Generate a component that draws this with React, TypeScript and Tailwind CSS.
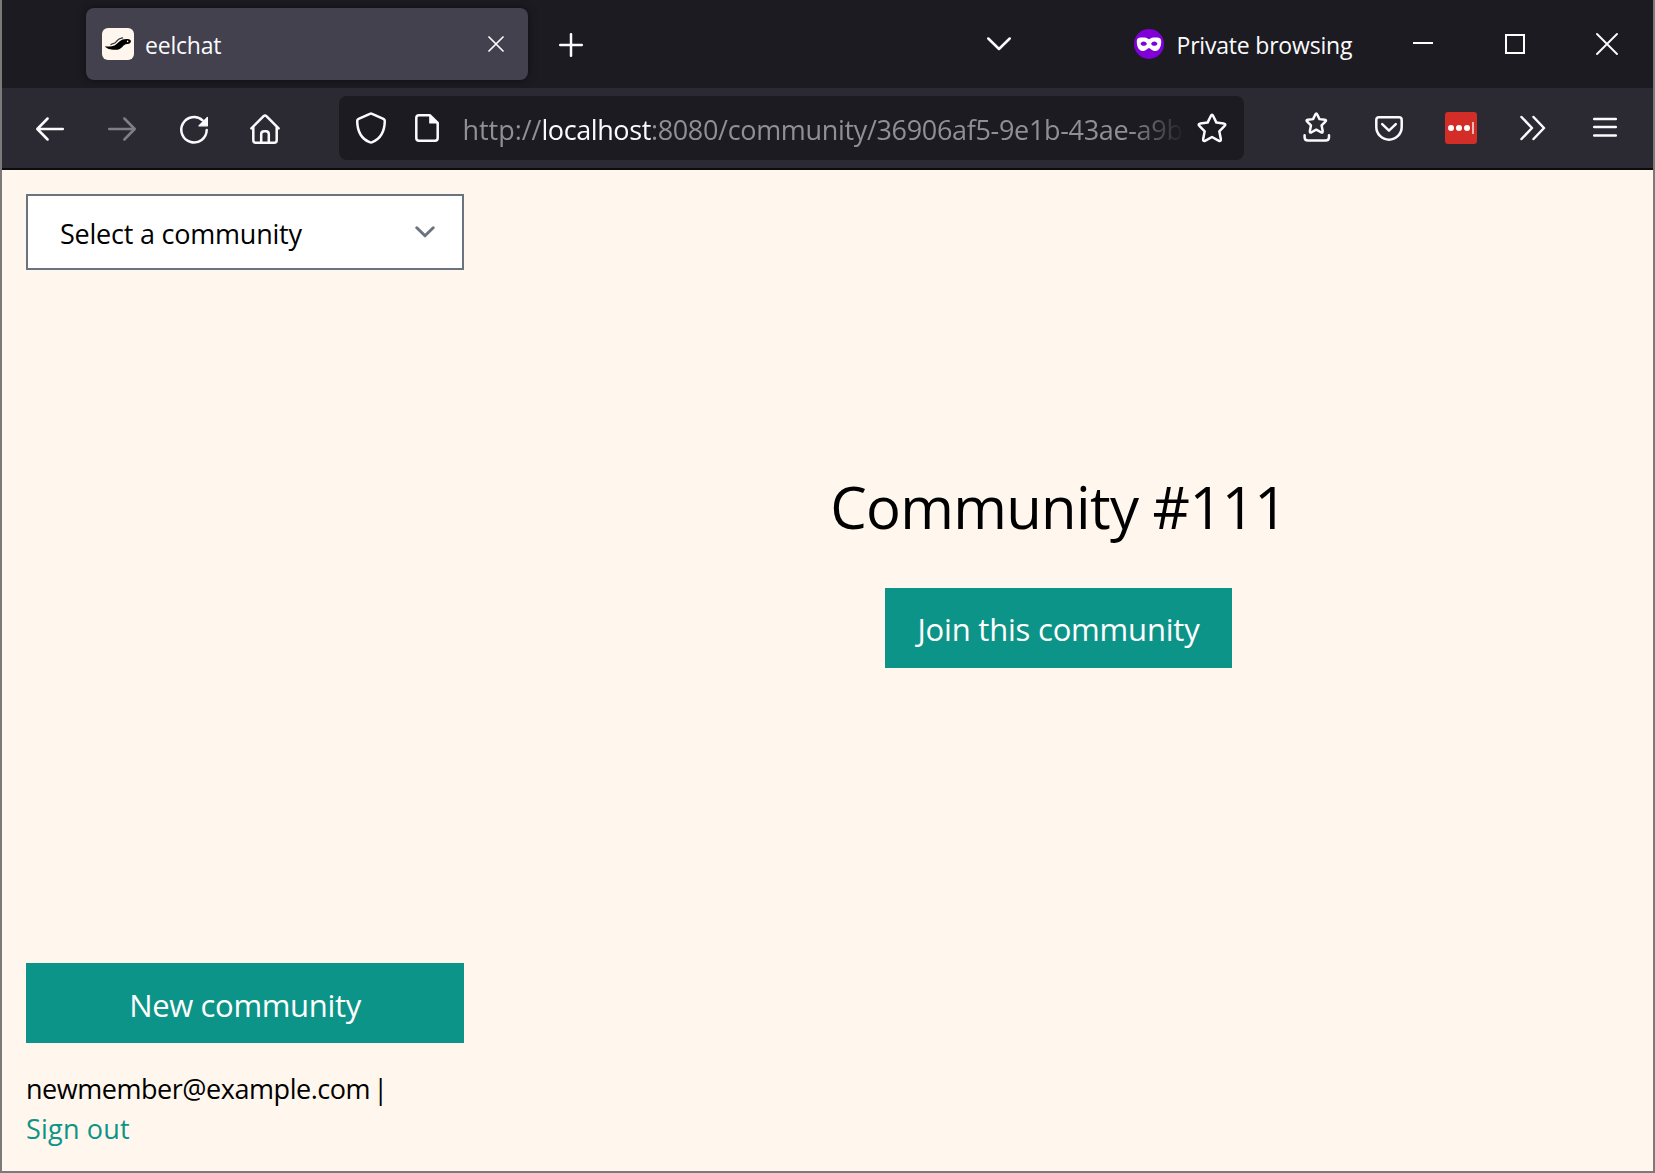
import type { ReactNode } from "react";

function Icon({ children, className = "" }: { children: ReactNode; className?: string }) {
  return (
    <svg
      viewBox="0 0 32 32"
      fill="none"
      stroke="#fbfbfe"
      strokeWidth="2.5"
      strokeLinecap="round"
      strokeLinejoin="round"
      className={`size-8 shrink-0 ${className}`}
    >
      {children}
    </svg>
  );
}

const STAR =
  "M14.7 4.2Q16 1.5 17.3 4.2L20.4 10.6L27.6 11.4Q30.6 11.9 28.4 14.1L23.3 19.3L24.8 26.8Q25.2 29.9 22.5 28.6L16 25L9.5 28.6Q6.8 29.9 7.2 26.8L8.7 19.3L3.6 14.1Q1.4 11.9 4.4 11.4L11.6 10.6Z";

function EelLogo() {
  return (
    <svg viewBox="0 0 32 32" className="size-8 shrink-0 rounded-md bg-[#fff7ed]">
      <path
        d="M3 18.2C6 18.6 9.5 18.7 12.5 17.6C15.5 16.2 17.5 12.6 20.5 11.6C23 10.9 27.5 10.8 28.8 12.4C29.5 14 28 15.8 25.5 16.1C22.5 16.4 21.8 17.2 20.3 19C18.2 21.2 15.5 22 12.5 21.8C8.5 21.5 4.5 20.8 3 18.2Z"
        fill="#000"
      />
      <path
        d="M9 16.6C10.4 15.4 11.6 16 13.2 14.8C15 13.2 15.8 10.9 18.6 10.3L20.6 9.8"
        fill="none"
        stroke="#333"
        strokeWidth="1.3"
        strokeLinecap="round"
      />
      <circle cx="25.6" cy="13.4" r="0.8" fill="#fff7ed" />
    </svg>
  );
}

function MaskBadge() {
  return (
    <svg viewBox="0 0 30 30" className="size-[30px] shrink-0">
      <circle cx="15" cy="15" r="15" fill="#8000d7" />
      <path
        fillRule="evenodd"
        fill="#fff"
        d="M15 10.3C13 8.9 11.4 8.5 9 8.5C5.4 8.5 2.8 8.6 2.8 12.6C2.8 18 4.8 22 8.8 22C12 22 13 19.2 15 19.2C17 19.2 18 22 21.2 22C25.2 22 27.2 18 27.2 12.6C27.2 8.6 24.6 8.5 21 8.5C18.6 8.5 17 8.9 15 10.3ZM6.4 14.9C7.8 11.6 11.6 11.6 13 14.9C11.2 17.4 8.2 17.4 6.4 14.9ZM17 14.9C18.4 11.6 22.2 11.6 23.6 14.9C21.8 17.4 18.8 17.4 17 14.9Z"
      />
    </svg>
  );
}

function TabBar() {
  return (
    <div className="flex h-[88px] items-center bg-[#1c1b22] pr-[35px] pl-[84px] text-[23px] text-[#fbfbfe]">
      <div className="flex h-[72px] w-[442px] items-center rounded-lg bg-[#42414d] pr-6 pl-4 shadow-[0_0_8px_rgba(0,0,0,0.5)]">
        <EelLogo />
        <span className="ml-[11px] pt-0.5 tracking-[-0.2px]">eelchat</span>
        <svg viewBox="0 0 16 16" className="ml-auto size-4" stroke="#fbfbfe" strokeWidth="1.7" strokeLinecap="round">
          <path d="M1 1L15 15M15 1L1 15" />
        </svg>
      </div>
      <svg viewBox="0 0 24 24" className="mt-0.5 ml-[31px] size-6" stroke="#fbfbfe" strokeWidth="2.5" strokeLinecap="round">
        <path d="M12 1.2V22.8M1.2 12H22.8" />
      </svg>
      <svg viewBox="0 0 24 14" className="ml-auto h-3.5 w-6" fill="none" stroke="#fbfbfe" strokeWidth="2.5" strokeLinecap="round" strokeLinejoin="round">
        <path d="M1.3 1.5L12 12L22.7 1.5" />
      </svg>
      <div className="ml-[123px] flex w-[279px] items-center">
        <MaskBadge />
        <span className="ml-[12.5px] pt-0.5 tracking-[-0.2px] whitespace-nowrap">Private browsing</span>
      </div>
      <div className="h-0.5 w-5 -translate-y-px bg-white" />
      <div className="ml-[72px] size-5 border-2 border-white" />
      <svg viewBox="0 0 22 22" className="ml-[71px] size-[22px]" stroke="#fbfbfe" strokeWidth="1.9" strokeLinecap="round">
        <path d="M1 1L21 21M21 1L1 21" />
      </svg>
    </div>
  );
}

function AddressBar() {
  return (
    <div className="ml-[58px] flex h-16 w-[905px] items-center rounded-lg bg-[#1c1b22] px-4">
      <Icon>
        <path d="M14.9 1.8Q16 1.2 17.1 1.8L28.4 6.9Q29.8 7.6 29.8 9.1C29.6 19 26 26.6 17.4 30.2Q16 30.9 14.6 30.2C6 26.6 2.4 19 2.2 9.1Q2.2 7.6 3.6 6.9Z" />
      </Icon>
      <Icon className="ml-6">
        <path d="M8 3.3H19L26.7 11V26Q26.7 28.7 24 28.7H8Q5.3 28.7 5.3 26V6Q5.3 3.3 8 3.3Z" />
        <path d="M18.8 3.6V11H26.2Z" fill="#fbfbfe" strokeWidth="1.2" />
      </Icon>
      <div className="ml-[19.5px] w-[722px] overflow-hidden pt-[5px] text-[27px] whitespace-nowrap text-[#8f8f95] [mask-image:linear-gradient(to_right,#000_calc(100%_-_56px),transparent)]">
        <span className="tracking-[-0.05px]">http://</span>
        <span className="tracking-[-0.4px] text-[#fbfbfe]">localhost</span>
        <span className="tracking-[-0.33px]">:8080/community/36906af5-9e1b-43ae-a9b</span>
      </div>
      <Icon className="ml-auto">
        <path d={STAR} />
      </Icon>
    </div>
  );
}

function Toolbar() {
  return (
    <div className="flex h-[82px] items-center border-b-2 border-[#0c0c0d] bg-[#2b2a33] pl-8">
      <div className="flex gap-10 pt-1">
        <Icon>
          <path d="M28.8 15H3.8M13.6 4.5L3.3 15L13.6 25.5" />
        </Icon>
        <Icon className="opacity-40">
          <path d="M3.2 15H28.2M18.4 4.5L28.7 15L18.4 25.5" />
        </Icon>
        <Icon>
          <path d="M28.7 16A12.7 12.7 0 1 1 24.6 6.4" />
          <path d="M29.4 3.3V11.8H20.9Z" fill="#fbfbfe" strokeWidth="1.2" />
        </Icon>
        <Icon className="-ml-px">
          <path d="M2.4 14.4L14.6 2.2Q16 0.9 17.4 2.2L29.6 14.4M4.3 13V26.2Q4.3 28.7 6.8 28.7H25.2Q27.7 28.7 27.7 26.2V13" />
          <path d="M12.2 28.3V20.2Q12.2 17.3 15.1 17.3H16.9Q19.8 17.3 19.8 20.2V28.3" />
        </Icon>
      </div>
      <AddressBar />
      <div className="ml-[57px] flex gap-10">
        <Icon>
          <path d={STAR} transform="translate(3.6 -0.6) scale(0.73)" strokeWidth="3.4" />
          <path d="M3.6 23.2V25.2Q3.6 28.6 7 28.6H24.6Q28 28.6 28 25.2V23.2" />
        </Icon>
        <Icon>
          <path d="M6 5.2H26Q28.7 5.2 28.7 7.9V15A12.7 12.7 0 0 1 3.3 15V7.9Q3.3 5.2 6 5.2Z" />
          <path d="M9.2 12.2L16 18.6L22.8 12.2" />
        </Icon>
        <div className="flex size-8 items-center justify-center gap-0.5 rounded-[3px] bg-[#d32d27]">
          <span className="size-1.5 rounded-full bg-white" />
          <span className="size-1.5 rounded-full bg-white" />
          <span className="size-1.5 rounded-full bg-white" />
          <span className="h-3 w-0.5 bg-[#f2b8b6]" />
        </div>
        <Icon>
          <path d="M4.5 5L15 16L4.5 27M16.5 5L27 16L16.5 27" />
        </Icon>
        <Icon>
          <path d="M5.2 6.9H26.8M5.2 15.1H26.8M5.2 23.4H26.8" />
        </Icon>
      </div>
    </div>
  );
}

function Sidebar() {
  return (
    <aside className="flex w-[486px] flex-col px-6 pt-6 pb-[22px] text-[27px] leading-10 text-black">
      <button className="flex h-[76px] items-center justify-between border-2 border-[#6b7280] bg-white pr-[27px] pl-8">
        <span className="pt-[3px] tracking-[-0.22px]">Select a community</span>
        <svg viewBox="0 0 20 12" className="h-3 w-5" fill="none" stroke="#6b7280" strokeWidth="3" strokeLinecap="round" strokeLinejoin="round">
          <path d="M1.8 1.8L10 9.8L18.2 1.8" />
        </svg>
      </button>
      <button className="mt-auto h-20 bg-[#0d9488] pt-1 text-[31px] tracking-[-0.34px] text-white">New community</button>
      <div className="mt-[26px]">
        <div className="tracking-[-0.46px] [word-spacing:-3.5px]">newmember@example.com |</div>
        <a className="tracking-[0.2px] text-[#0d9488]">Sign out</a>
      </div>
    </aside>
  );
}

export default function App() {
  return (
    <div className="flex h-[1173px] w-[1655px] flex-col border-x-2 border-b-2 border-[#7b797a] bg-[#fff7ed] font-['Open_Sans',sans-serif]">
      <TabBar />
      <Toolbar />
      <div className="flex flex-1">
        <Sidebar />
        <main className="flex flex-1 flex-col items-center pt-[301px] pr-6">
          <h1 className="text-[58px] leading-[72px] tracking-[-0.7px] text-black">Community #111</h1>
          <button className="mt-[45px] h-20 w-[347px] bg-[#0d9488] pt-0.5 text-[31px] tracking-[-0.2px] whitespace-nowrap text-white">
            Join this community
          </button>
        </main>
      </div>
    </div>
  );
}
